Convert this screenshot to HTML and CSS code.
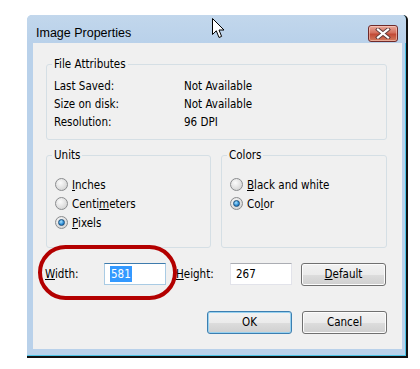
FILE: index.html
```html
<!DOCTYPE html>
<html lang="en">
<head>
  <meta charset="UTF-8">
  <title>Image Properties</title>
  <link rel="stylesheet" href="styles.css">
</head>
<body>
  <div class="window">
    <div class="titlebar">
      <span class="title">Image Properties</span>
      <div class="close-btn">
        <svg width="16" height="11" viewBox="0 0 16 11">
          <path d="M3 1.5 L13 9.5 M13 1.5 L3 9.5" stroke="#5b3a3a" stroke-width="4" stroke-linecap="square"/>
          <path d="M3 1.5 L13 9.5 M13 1.5 L3 9.5" stroke="#fff" stroke-width="2.2" stroke-linecap="square"/>
        </svg>
      </div>
    </div>

    <div class="client">
      <fieldset class="group">
        <legend>File Attributes</legend>
        <div class="attrs">
          <span>Last Saved:</span><span>Not Available</span>
          <span>Size on disk:</span><span>Not Available</span>
          <span>Resolution:</span><span>96 DPI</span>
        </div>
      </fieldset>

      <div class="options">
        <fieldset class="group units">
          <legend>Units</legend>
          <div class="radio"><i class="dot"></i><span><u>I</u>nches</span></div>
          <div class="radio"><i class="dot"></i><span>Centi<u>m</u>eters</span></div>
          <div class="radio"><i class="dot on"></i><span><u>P</u>ixels</span></div>
        </fieldset>
        <fieldset class="group colors">
          <legend>Colors</legend>
          <div class="radio"><i class="dot"></i><span><u>B</u>lack and white</span></div>
          <div class="radio"><i class="dot on"></i><span>Co<u>l</u>or</span></div>
        </fieldset>
      </div>

      <div class="size-row">
        <span class="lbl-w"><u>W</u>idth:</span>
        <div class="field focus"><span class="sel">581</span></div>
        <span class="lbl-h"><u>H</u>eight:</span>
        <div class="field">267</div>
        <div class="btn"><u>D</u>efault</div>
      </div>

      <div class="actions">
        <div class="btn default">OK</div>
        <div class="btn">Cancel</div>
      </div>
    </div>

    <!-- annotation + mouse pointer on top of the dialog -->
    <div class="mark"></div>
    <svg class="cursor" width="13" height="21" viewBox="0 0 13 21">
      <path d="M0.5 0.5 L0.5 16.5 L4.3 12.8 L7 19.5 L9.6 18.4 L7 12 L12 12 Z" fill="#fff" stroke="#000" stroke-width="1" stroke-linejoin="miter"/>
    </svg>
  </div>
</body>
</html>
```

FILE: styles.css
```css
body { margin: 0; background: #fff; font-family: "DejaVu Sans Condensed", "DejaVu Sans", sans-serif; font-size: 11.5px; color: #000; }

.window {
  position: relative;
  margin: 15px 0 0 27px;
  width: 379px;
  height: 341px;
  display: flex;
  flex-direction: column;
  background: #b9d1ea;
  border-right: 2px solid #111;
  border-bottom: 2px solid #111;
  border-radius: 5px 5px 0 0;
  box-shadow: inset -1px -1px 0 #4cc4e6;
}

.titlebar {
  height: 20px;
  padding: 8px 8px 0 9px;
  display: flex;
  align-items: center;
  justify-content: space-between;
  background: linear-gradient(#c2d7ec, #b9d1ea);
  border-radius: 5px 5px 0 0;
}
.title { font-family: "Liberation Sans", sans-serif; font-size: 12.5px; color: #000; }

.close-btn {
  width: 28px;
  height: 15px;
  display: flex;
  align-items: center;
  justify-content: center;
  border: 1px solid #6e2a2a;
  border-radius: 3px;
  background: linear-gradient(#e9a99b, #d4705e 45%, #c24a36 55%, #d37b5e);
  box-shadow: inset 0 0 0 1px rgba(255, 220, 210, 0.5);
}

.client {
  flex: 1;
  margin: 0 4px 7px 6px;
  padding: 14px 15px 0 13px;
  background: #f0f0f0;
}

.group {
  margin: 0;
  padding: 0 7px;
  min-width: 0;
  border: 1px solid #d5dfe5;
  border-radius: 3px;
}
.group legend { padding: 0 2px; margin-left: -2px; line-height: 14px; }

.attrs {
  display: grid;
  grid-template-columns: 130px 1fr;
  line-height: 18px;
  padding: 6px 0 8px;
}

.options { display: flex; gap: 10px; margin-top: 8px; }
.units { width: 165px; box-sizing: border-box; padding-top: 13px; padding-bottom: 15px; }
.colors { width: 166px; box-sizing: border-box; padding-top: 13px; }

.radio { display: flex; align-items: center; gap: 4px; height: 19px; padding-left: 1px; }
.dot {
  width: 11px;
  height: 11px;
  border: 1px solid #8a8c8e;
  border-radius: 50%;
  background: radial-gradient(circle at 40% 35%, #fbfbfb, #d9d9d9 70%, #c8c8c8);
  position: relative;
}
.dot.on::after {
  content: "";
  position: absolute;
  left: 2px; top: 2px;
  width: 5px; height: 5px;
  border: 1px solid #1d4f7a;
  border-radius: 50%;
  background: radial-gradient(circle at 40% 35%, #a9e3ff, #2a8ad4 60%, #15569a);
}

.size-row { display: flex; align-items: center; margin-top: 13px; }
.lbl-w { width: 59px; margin-left: -1px; }
.lbl-h { width: 54px; margin-left: 10px; }
.field {
  width: 55px;
  height: 20px;
  line-height: 20px;
  padding-left: 5px;
  background: #fff;
  border: 1px solid #e2e3ea;
  border-top-color: #abadb3;
}
.field.focus { border-color: #a9cbe4; border-top-color: #3d7bad; }
.sel { background: #3399ff; color: #fff; padding: 1px 1px; }

.btn {
  width: 83px;
  height: 21px;
  line-height: 21px;
  text-align: center;
  border: 1px solid #707070;
  border-radius: 3px;
  background: linear-gradient(#f2f2f2, #ebebeb 50%, #dddddd 51%, #cfcfcf);
  box-shadow: inset 0 0 0 1px #fcfcfc;
}
.size-row .btn { margin-left: 9px; margin-top: 2px; }
.btn.default { border-color: #3c7fb1; box-shadow: inset 0 0 0 1px #98d1ef; }

.actions { display: flex; justify-content: flex-end; gap: 10px; margin-top: 25px; }

.mark {
  position: absolute;
  left: 11px;
  top: 230px;
  width: 131px;
  height: 47px;
  border: 4px solid #b30000;
  border-radius: 28px;
}

.cursor { position: absolute; left: 185px; top: 3px; }
```
